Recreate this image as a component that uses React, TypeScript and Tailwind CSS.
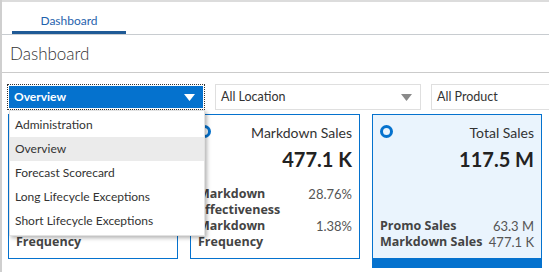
import React from "react";

const font = { fontFamily: "Lato, 'Noto Sans', sans-serif" };
const boldFont = { fontFamily: "'Open Sans', 'Noto Sans', sans-serif" };

const menuItems = [
  "Administration",
  "Overview",
  "Forecast Scorecard",
  "Long Lifecycle Exceptions",
  "Short Lifecycle Exceptions",
];

type Row = { label: string; value: string };

type Card = { title: string; value: string; rows: Row[]; selected?: boolean };

const cards: Card[] = [
  {
    title: "Clearance Sales",
    value: "12.4 M",
    rows: [
      { label: "Clearance Effectiveness", value: "64.02%" },
      { label: "Clearance Frequency", value: "2.11%" },
    ],
  },
  {
    title: "Markdown Sales",
    value: "477.1 K",
    rows: [
      { label: "Markdown Effectiveness", value: "28.76%" },
      { label: "Markdown Frequency", value: "1.38%" },
    ],
  },
  {
    title: "Total Sales",
    value: "117.5 M",
    selected: true,
    rows: [
      { label: "Promo Sales", value: "63.3 M" },
      { label: "Markdown Sales", value: "477.1 K" },
    ],
  },
];

function Caret({ className }: { className: string }) {
  return (
    <svg width="11" height="7" viewBox="0 0 11 7" className={className}>
      <path d="M0 0h11L5.5 7z" fill="currentColor" />
    </svg>
  );
}

function MetricCard({ card }: { card: Card }) {
  return (
    <div
      className={
        "w-[170px] h-full flex flex-col px-[7px] pt-[9px] pb-[8px] border border-[#0572ce] " +
        (card.selected ? "bg-[#eaf4fd] border-b-[10px]" : "bg-white")
      }
    >
      <div className="flex items-start justify-between">
        <span className="mt-[1px] w-[13px] h-[13px] rounded-full border-[3px] border-[#0572ce] shrink-0" />
        <span className="text-[14px] leading-[18px] text-[#333]">{card.title}</span>
      </div>
      <div className="text-right text-[20px] leading-[24px] font-bold text-[#222] mt-[5px]">
        {card.value}
      </div>
      <div className="mt-auto flex flex-col">
        {card.rows.map((r) => (
          <div key={r.label} className="flex justify-between gap-[2px] text-[13px] leading-[16px]">
            <span style={boldFont} className="text-[12.5px] font-bold text-[#444]">
              {r.label}
            </span>
            <span className="text-[#555] whitespace-nowrap">{r.value}</span>
          </div>
        ))}
      </div>
    </div>
  );
}

export default function App() {
  return (
    <div
      style={font}
      className="relative w-[549px] h-[272px] overflow-hidden bg-white border-l-2 border-[#cfcfcf]"
    >
      {/* tab bar */}
      <div className="h-[35px] border-t-2 border-[#dcdcdc] border-b border-b-[#c8ccd0] flex items-end pl-[10px]">
        <div className="w-[114px] h-[31px] flex flex-col items-center justify-between">
          <span className="text-[12px] leading-[16px] mt-[10px] text-[#1f62ad]">Dashboard</span>
          <span className="w-full h-[3px] bg-[#1f5a96]" />
        </div>
      </div>

      {/* page title */}
      <div className="h-[38px] border-b border-[#cbcbcb] flex items-center pl-[8px]">
        <h1 className="text-[17px] font-light text-[#333]">Dashboard</h1>
      </div>

      {/* filters */}
      <div className="flex gap-[10px] pl-[5px] mt-[11px]">
        <div className="shrink-0 w-[198px] h-[26px] p-[1px] border border-dotted border-[#333]">
          <div className="h-full bg-[#0572ce] flex items-center justify-between pl-[5px] pr-[8px]">
            <span className="text-[12px] font-bold text-white">Overview</span>
            <Caret className="text-white" />
          </div>
        </div>
        <div className="shrink-0 w-[206px] h-[26px] border border-[#dfdfdf] flex items-center justify-between pl-[5px] pr-[8px]">
          <span className="text-[12.5px] text-[#333]">All Location</span>
          <Caret className="text-[#8a8a8a]" />
        </div>
        <div className="shrink-0 w-[206px] h-[26px] border border-[#dfdfdf] flex items-center pl-[5px]">
          <span className="text-[12.5px] text-[#333]">All Product</span>
        </div>
      </div>

      {/* cards */}
      <div className="flex gap-[12px] pl-[6px] mt-[4px] h-[154px]">
        {cards.map((c) => (
          <div key={c.title} className={"shrink-0 " + (c.selected ? "h-[154px]" : "h-[145px]")}>
            <MetricCard card={c} />
          </div>
        ))}
      </div>

      {/* open dropdown menu */}
      <div className="absolute left-[7px] top-[110px] w-[196px] bg-white py-[2px] shadow-[2px_2px_4px_rgba(0,0,0,0.3)] border border-[#e2e2e2]">
        {menuItems.map((m) => (
          <div
            key={m}
            className={
              "h-[24px] flex items-center pl-[5px] text-[12px] text-[#333] " +
              (m === "Overview" ? "bg-[#ebebeb]" : "")
            }
          >
            {m}
          </div>
        ))}
      </div>
    </div>
  );
}
